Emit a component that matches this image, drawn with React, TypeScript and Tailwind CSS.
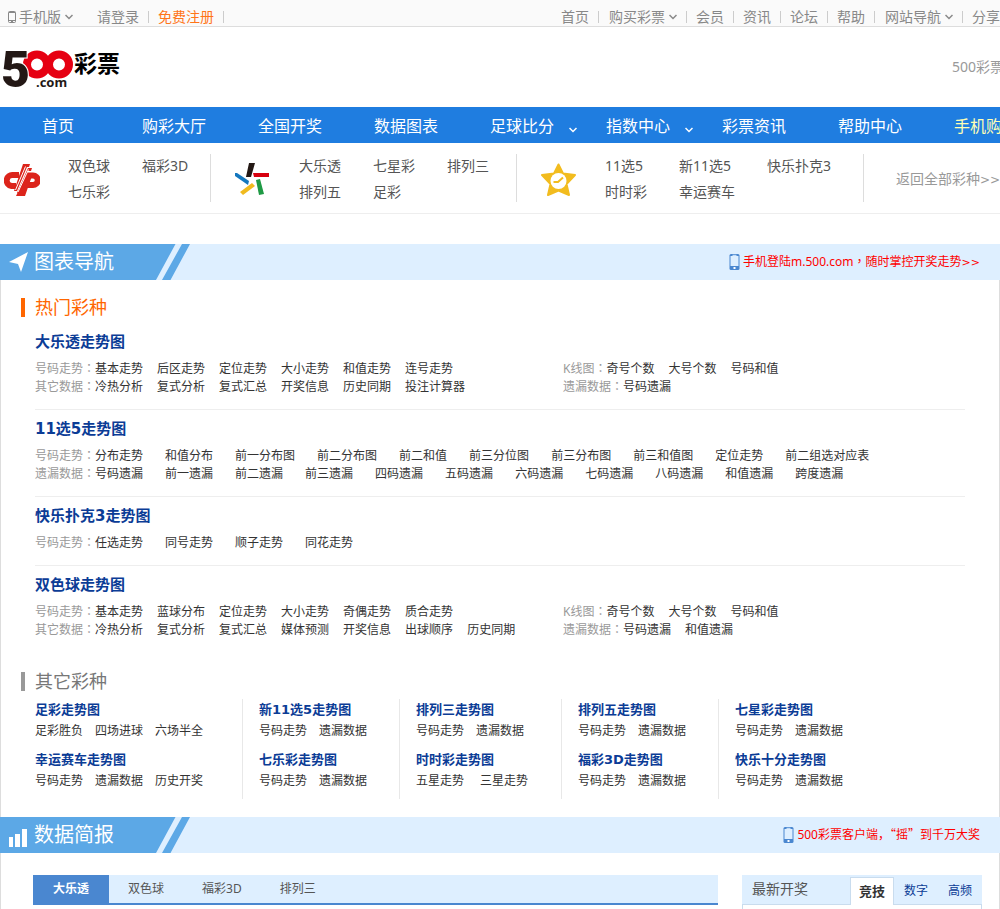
const homeLinks = [
  { name: "首页" },
  { name: "购买彩票", menu: true },
  { name: "会员" },
  { name: "资讯" },
  { name: "论坛" },
  { name: "帮助" },
  { name: "网站导航", menu: true },
];

const mainNav = [
  { name: "首页" },
  { name: "购彩大厅" },
  { name: "全国开奖" },
  { name: "数据图表" },
  { name: "足球比分", menu: true },
  { name: "指数中心", menu: true },
  { name: "彩票资讯" },
  { name: "帮助中心" },
];

type Row = { label: string; links: string[] };

type Lottery = { title: string; wide?: boolean; left: Row[]; right?: Row[] };

const hotLotteries: Lottery[] = [
  {
    title: "大乐透走势图",
    left: [
      { label: "号码走势", links: ["基本走势", "后区走势", "定位走势", "大小走势", "和值走势", "连号走势"] },
      { label: "其它数据", links: ["冷热分析", "复式分析", "复式汇总", "开奖信息", "历史同期", "投注计算器"] },
    ],
    right: [
      { label: "K线图", links: ["奇号个数", "大号个数", "号码和值"] },
      { label: "遗漏数据", links: ["号码遗漏"] },
    ],
  },
  {
    title: "11选5走势图",
    wide: true,
    left: [
      {
        label: "号码走势",
        links: ["分布走势", "和值分布", "前一分布图", "前二分布图", "前二和值", "前三分位图", "前三分布图", "前三和值图", "定位走势", "前二组选对应表"],
      },
      {
        label: "遗漏数据",
        links: ["号码遗漏", "前一遗漏", "前二遗漏", "前三遗漏", "四码遗漏", "五码遗漏", "六码遗漏", "七码遗漏", "八码遗漏", "和值遗漏", "跨度遗漏"],
      },
    ],
  },
  {
    title: "快乐扑克3走势图",
    wide: true,
    left: [{ label: "号码走势", links: ["任选走势", "同号走势", "顺子走势", "同花走势"] }],
  },
  {
    title: "双色球走势图",
    left: [
      { label: "号码走势", links: ["基本走势", "蓝球分布", "定位走势", "大小走势", "奇偶走势", "质合走势"] },
      { label: "其它数据", links: ["冷热分析", "复式分析", "复式汇总", "媒体预测", "开奖信息", "出球顺序", "历史同期"] },
    ],
    right: [
      { label: "K线图", links: ["奇号个数", "大号个数", "号码和值"] },
      { label: "遗漏数据", links: ["号码遗漏", "和值遗漏"] },
    ],
  },
];

const otherLotteries = [
  [
    { title: "足彩走势图", links: ["足彩胜负", "四场进球", "六场半全"] },
    { title: "幸运赛车走势图", links: ["号码走势", "遗漏数据", "历史开奖"] },
  ],
  [
    { title: "新11选5走势图", links: ["号码走势", "遗漏数据"] },
    { title: "七乐彩走势图", links: ["号码走势", "遗漏数据"] },
  ],
  [
    { title: "排列三走势图", links: ["号码走势", "遗漏数据"] },
    { title: "时时彩走势图", links: ["五星走势", "三星走势"], spaced: true },
  ],
  [
    { title: "排列五走势图", links: ["号码走势", "遗漏数据"] },
    { title: "福彩3D走势图", links: ["号码走势", "遗漏数据"] },
  ],
  [
    { title: "七星彩走势图", links: ["号码走势", "遗漏数据"] },
    { title: "快乐十分走势图", links: ["号码走势", "遗漏数据"] },
  ],
];

const Chevron = ({ className }: { className?: string }) => (
  <svg width="8" height="6" viewBox="0 0 8 6" fill="none" stroke="currentColor" strokeWidth="1.5" className={className}>
    <path d="M0.5 1 4 4.5 7.5 1" />
  </svg>
);

const PhoneIcon = () => (
  <svg width="11" height="16" viewBox="0 0 11 16" className="shrink-0">
    <rect x="0.5" y="0" width="10" height="16" rx="1.5" fill="#4a87d0" />
    <rect x="1.5" y="2" width="8" height="10" fill="#deefff" />
    <rect x="3.5" y="0.8" width="4" height="1" fill="#deefff" />
    <rect x="4.5" y="13" width="2" height="2" fill="#fff" />
  </svg>
);

const Logo = () => (
  <svg width="124" height="46" viewBox="0 0 124 46" role="img" aria-label="500彩票">
    <g fill="none" stroke="#e60012" strokeWidth="8">
      <circle cx="35" cy="17.5" r="10" />
      <circle cx="57" cy="17.5" r="10" />
    </g>
    <text x="-1" y="40" fontFamily="Roboto, sans-serif" fontWeight="900" fontSize="50" fill="#231815" stroke="#fff" strokeWidth="2" paintOrder="stroke">5</text>
    <text x="34" y="40" fontFamily="'Noto Sans', sans-serif" fontWeight="700" fontSize="13" fill="#231815">.com</text>
    <text x="72" y="25" fontFamily="'Noto Sans CJK SC', sans-serif" fontWeight="700" fontSize="23" fill="#000">彩票</text>
  </svg>
);

const WelfareLogo = () => (
  <svg width="36" height="34" viewBox="0 0 36 34" className="mt-1">
    <g fill="none" stroke="#dc241b" strokeWidth="6">
      <path d="M15 12H9a5 5 0 0 0-1.500 11H12" />
      <path d="M22 12.500h7a4.500 4.500 0 0 1 0 9.500h-7" />
    </g>
    <path d="M19 1h7l-1 3h-2L13 28h-3zM24 5h4l-1 3h-3L14 30h-1zM23 10h6l-8 23h-9z" fill="#dc241b" />
    <path d="M21.500 3.500 11.500 27M24.500 6.500 14 29" stroke="#fff" strokeWidth="1" />
  </svg>
);

const SportsLogo = () => (
  <svg width="36" height="34" viewBox="0 0 36 34" className="mt-1">
    <path d="M14 0h6l-4 14h-5z" fill="#231815" />
    <path d="M18 10h16v4H19z" fill="#d7000f" />
    <path d="M21 17l4-1 4 15-5 1z" fill="#1f9a45" />
    <path d="M17 20l3 3-12 9-3-3z" fill="#f0ba1e" />
    <path d="M0 10h2l12 8-1 4L0 13z" fill="#1477be" />
  </svg>
);

const StarLogo = () => (
  <svg width="36" height="34" viewBox="0 0 36 34" className="mt-1">
    <path
      d="M17.500 1.500l4.500 9 12 1.500-8.500 9 2.500 11-10.500-4.500L7 32l2.500-11L1 12l12-1.500z"
      fill="#f2bc1f"
      stroke="#f2bc1f"
      strokeWidth="2"
      strokeLinejoin="round"
    />
    <circle cx="17.500" cy="18" r="8" fill="#fff" />
    <path d="M12.500 19h4.500l5-4.500" fill="none" stroke="#f2bc1f" strokeWidth="2" />
  </svg>
);

const PlaneIcon = () => (
  <svg width="19" height="20" viewBox="0 0 19 20" fill="#fff">
    <path d="M19 0 12 20 9 12 0 10z" />
  </svg>
);

const BarsIcon = () => (
  <svg width="19" height="19" viewBox="0 0 19 19" fill="#fff" className="mt-1">
    <path d="M0 9h4v10H0zM6 6h5v13H6zM13 1h5v18h-5z" />
  </svg>
);

const Separator = () => <span className="h-3 w-px bg-[#ccc]" />;

const TopBar = () => (
  <div className="flex h-[27px] items-end border-b border-[#ddd] bg-[#fafafa] text-sm leading-[18px] text-[#888]">
    <a href="#" className="flex items-center pl-2">
      <svg width="8" height="12" viewBox="0 0 8 12" fill="none" stroke="currentColor" className="mr-[3px]">
        <rect x="0.500" y="0.500" width="7" height="11" rx="1" />
        <path d="M1 1.500h6M1 9.500h6M3 10.500h2" />
      </svg>
      手机版
      <Chevron className="ml-1" />
    </a>
    <div className="flex items-center pl-6">
      <a href="#" className="pr-[9px]">请登录</a>
      <Separator />
      <a href="#" className="px-[9px] text-[#ff7519]">免费注册</a>
      <Separator />
    </div>
    <nav className="ml-auto flex items-center">
      {homeLinks.map((link) => (
        <div key={link.name} className="flex items-center">
          <a href="#" className={link.menu ? "flex items-center pr-[9px] pl-2.5" : "px-[9px]"}>
            {link.name}
            {link.menu && <Chevron className="ml-1" />}
          </a>
          <Separator />
        </div>
      ))}
      <a href="#" className="pl-[9px]">分享</a>
    </nav>
  </div>
);

const MainNav = () => (
  <nav className="flex h-9 overflow-hidden bg-[#1f7de0] text-base leading-[38px] text-white">
    {mainNav.map((item) => (
      <a key={item.name} href="#" className="relative w-29 shrink-0 text-center">
        {item.name}
        {item.menu && <Chevron className="absolute right-[3px] bottom-2.5" />}
      </a>
    ))}
    <a href="#" className="w-29 shrink-0 pl-[26px] text-[#ffffb4]">手机购彩</a>
  </nav>
);

const SubNav = () => (
  <div className="flex items-center overflow-hidden border-b border-[#eee] py-[11px] text-sm leading-[26px] whitespace-nowrap text-[#555]">
    <div className="flex h-12 w-[211px] shrink-0 items-center border-r border-[#ddd] pl-1">
      <WelfareLogo />
      <div className="ml-7 grid grid-cols-[74px_auto] pt-0.5">
        <a href="#">双色球</a>
        <a href="#">福彩3D</a>
        <a href="#">七乐彩</a>
      </div>
    </div>
    <div className="flex h-12 w-[306px] shrink-0 items-center border-r border-[#ddd] pl-6">
      <SportsLogo />
      <div className="ml-7 grid grid-cols-[74px_74px_auto] pt-0.5">
        <a href="#">大乐透</a>
        <a href="#">七星彩</a>
        <a href="#">排列三</a>
        <a href="#">排列五</a>
        <a href="#">足彩</a>
      </div>
    </div>
    <div className="flex h-12 w-[347px] shrink-0 items-center border-r border-[#ddd] pl-6">
      <StarLogo />
      <div className="ml-7 grid grid-cols-[74px_88px_auto] pt-0.5">
        <a href="#">11选5</a>
        <a href="#">新11选5</a>
        <a href="#">快乐扑克3</a>
        <a href="#">时时彩</a>
        <a href="#">幸运赛车</a>
      </div>
    </div>
    <a href="#" className="ml-auto pt-0.5 text-[#999]">
      返回全部彩种<span className="font-['DejaVu_Sans'] text-xs">&gt;&gt;</span>
    </a>
  </div>
);

const SectionBar = ({ icon, title, children }: any) => (
  <div className="-mx-px flex h-9 items-center justify-between bg-[#deefff]">
    <div className="relative">
      <svg width="190" height="36" viewBox="0 0 190 36" fill="#5ca8e6" className="block">
        <path d="M0 0h175.500L156 36H0zM182 0h8l-19.500 36H162z" />
      </svg>
      <div className="absolute inset-0 flex items-center pl-[9px]">
        {icon}
        <h2 className="ml-1.5 text-xl leading-8 text-white">{title}</h2>
      </div>
    </div>
    <a href="#" className="mr-5 flex items-center gap-[3px] text-xs text-[#f00]">
      <PhoneIcon />
      <span>{children}</span>
    </a>
  </div>
);

const LinkRow = ({ row, wide }: { row: Row; wide?: boolean }) => (
  <div className="flex h-[18px]">
    <span className="text-[#999]">
      {row.label}
      <span className="font-['Noto_Sans_CJK_TC'] leading-none">：</span>
    </span>
    <div className={wide ? "flex gap-[22px]" : "flex gap-3.5"}>
      {row.links.map((link) => (
        <a key={link} href="#">{link}</a>
      ))}
    </div>
  </div>
);

const HotLottery = ({ lottery }: { lottery: Lottery }) => (
  <div className="border-b border-[#eee] pt-2 pb-[13px] last:border-b-0">
    <h4 className="h-6 font-['DejaVu_Sans','Noto_Sans_CJK_SC',sans-serif] text-[15px] leading-[22px] font-bold text-[#0b3c96]">
      {lottery.title}
    </h4>
    <div className="mt-[5px] flex text-xs leading-[18px] text-[#333]">
      <div className={lottery.right ? "w-[528px]" : "w-full"}>
        {lottery.left.map((row) => (
          <LinkRow key={row.label} row={row} wide={lottery.wide} />
        ))}
      </div>
      {lottery.right && (
        <div>
          {lottery.right.map((row) => (
            <LinkRow key={row.label} row={row} />
          ))}
        </div>
      )}
    </div>
  </div>
);

const ChartNav = () => (
  <section>
    <SectionBar icon={<PlaneIcon />} title="图表导航">
      手机登陆m.500.com<span className="font-['Noto_Sans_CJK_TC'] leading-none">，</span>随时掌控开奖走势
      <span className="font-['DejaVu_Sans'] text-[11px]">&gt;&gt;</span>
    </SectionBar>
    <h3 className="mt-[18px] ml-5 border-l-4 border-[#f60] pl-2.5 text-lg leading-[19px] text-[#f60]">热门彩种</h3>
    <div className="mt-1.5 px-[34px]">
      {hotLotteries.map((lottery) => (
        <HotLottery key={lottery.title} lottery={lottery} />
      ))}
    </div>
    <h3 className="mt-5 ml-5 border-l-4 border-[#999] pl-2.5 text-lg leading-[19px] text-[#777]">其它彩种</h3>
    <div className="mt-2 mb-[18px] grid grid-cols-[208px_157px_162px_157px_auto] pl-[34px]">
      {otherLotteries.map((column) => (
        <div key={column[0].title} className="border-r border-[#e8e8e8] pl-4 first:pl-0 last:border-r-0">
          {column.map((item: any) => (
            <div key={item.title} className="pb-2">
              <h4 className="font-['DejaVu_Sans','Noto_Sans_CJK_SC',sans-serif] text-[13px] leading-[22px] font-bold text-[#0b3c96]">
                {item.title}
              </h4>
              <div className={item.spaced ? "flex gap-4 text-xs leading-5 text-[#333]" : "flex gap-3 text-xs leading-5 text-[#333]"}>
                {item.links.map((link: string) => (
                  <a key={link} href="#">{link}</a>
                ))}
              </div>
            </div>
          ))}
        </div>
      ))}
    </div>
  </section>
);

const DataBrief = () => (
  <section>
    <SectionBar icon={<BarsIcon />} title="数据简报">
      500彩票客户端，<span className="font-['Noto_Sans_CJK_SC'] leading-none">“摇”</span>到千万大奖
    </SectionBar>
    <div className="mt-[22px] flex gap-6 pr-[17px] pl-8">
      <div className="flex h-[30px] flex-1 border-b-2 border-[#4a87d0] bg-[#deefff] text-xs leading-7 text-[#555]">
        <button className="bg-[#4a87d0] px-5 font-bold text-white">大乐透</button>
        <button className="px-[19px]">双色球</button>
        <button className="px-[19px]">福彩3D</button>
        <button className="px-[19px]">排列三</button>
      </div>
      <div className="w-60">
        <div className="flex h-[30px] items-end border-b border-[#c9dcee] bg-[#deefff] text-xs text-[#0b3c96]">
          <h3 className="w-[108px] pl-2.5 text-sm leading-[30px] text-[#555]">最新开奖</h3>
          <button className="-mb-px h-7 w-11 border border-b-0 border-[#c9dcee] bg-white text-[13px] font-bold text-[#333]">竞技</button>
          <button className="h-[26px] w-11">数字</button>
          <button className="h-[26px] w-11">高频</button>
        </div>
        <div className="h-10 border-x border-[#c9dcee]" />
      </div>
    </div>
  </section>
);

const App = () => {
  return (
    <div className="h-screen overflow-hidden bg-white font-['Noto_Sans','Noto_Sans_CJK_SC',sans-serif]">
      <TopBar />
      <header className="flex h-20 items-start justify-between">
        <a href="#" className="mt-5 ml-0.5">
          <Logo />
        </a>
        <span className="mt-[30px] w-12 overflow-hidden text-sm whitespace-nowrap text-[#999]">500彩票</span>
      </header>
      <MainNav />
      <SubNav />
      <main className="mt-[30px] border-x border-[#ddd]">
        <ChartNav />
        <DataBrief />
      </main>
    </div>
  );
};

export default App;
